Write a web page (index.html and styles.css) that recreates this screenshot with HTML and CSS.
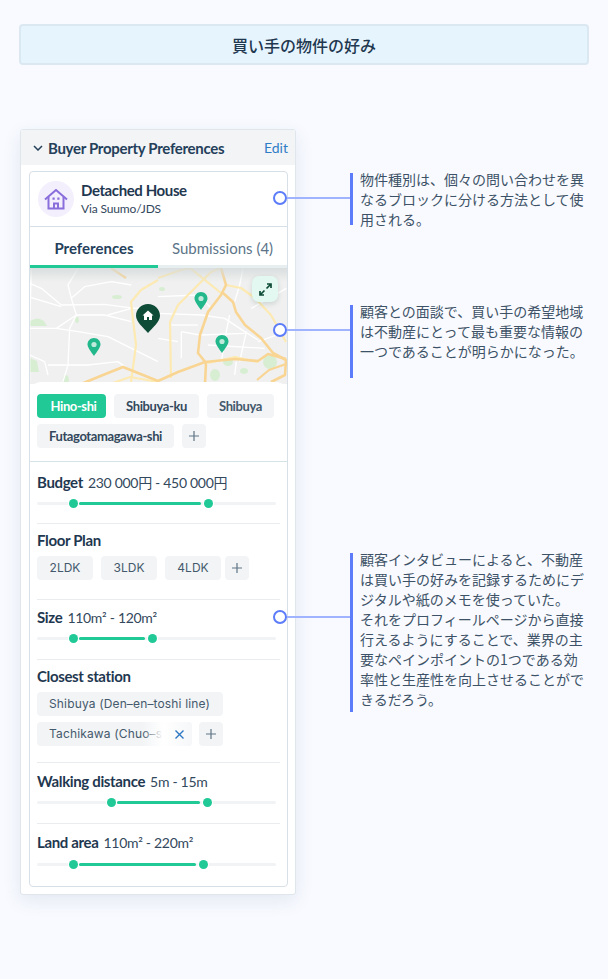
FILE: index.html
```html
<!DOCTYPE html>
<html lang="ja">
<head>
<meta charset="utf-8">
<title>買い手の物件の好み</title>
<link rel="stylesheet" href="styles.css">
</head>
<body>
<div class="stage">
  <h1 class="title">買い手の物件の好み</h1>

  <section class="card">
    <header class="card-head">
      <svg class="chevron" width="10" height="6" viewBox="0 0 10 6"><path d="M1 1l4 4 4-4" fill="none" stroke="#24405a" stroke-width="1.5"/></svg>
      <h2 class="card-title">Buyer Property Preferences</h2>
      <span class="edit">Edit</span>
    </header>

    <div class="inner">
      <div class="profile">
        <span class="avatar">
          <svg width="24" height="21" viewBox="0 0 24 21"><path d="M1 10.500L12 1l11 9.500" fill="none" stroke="#8a6fdc" stroke-width="2"/><path d="M4.500 8V19.500H19.500V8M10 19.500V14.500h4v5" fill="none" stroke="#8a6fdc" stroke-width="2"/><path d="M8.500 8.500h2.200v2.200H8.500zM13.300 8.500h2.200v2.200h-2.200z" fill="#8a6fdc"/></svg>
        </span>
        <div class="profile-text">
          <div class="profile-name">Detached House</div>
          <div class="profile-sub">Via Suumo/JDS</div>
        </div>
      </div>

      <div class="tabs">
        <div class="tab tab-active">Preferences</div>
        <div class="tab">Submissions (4)</div>
      </div>

      <div class="map">
        <svg class="map-art" width="257" height="116" viewBox="30 268 257 116">
          <rect x="30" y="268" width="257" height="116" fill="#f0f0f0"/>
          <g fill="#d8eed3">
            <path d="M30 321q8-5 14 0l3 5H30z"/>
            <ellipse cx="117" cy="297" rx="5" ry="2"/>
            <path d="M30 358l7 3 2 11H30z"/>
            <ellipse cx="270" cy="362" rx="7" ry="7"/>
            <ellipse cx="228" cy="362" rx="5" ry="4"/>
            <ellipse cx="215" cy="375" rx="5" ry="6"/>
            <ellipse cx="244" cy="371" rx="4" ry="3"/>
            <ellipse cx="66" cy="380" rx="3" ry="5"/>
            <ellipse cx="162" cy="289" rx="3" ry="2"/>
            <ellipse cx="77" cy="320" rx="2" ry="3"/>
          </g>
          <g transform="translate(28 265) scale(.3333)" fill="none" stroke="#fff" stroke-width="4" stroke-linejoin="round">
            <path d="M5 55l35 15 60 50 130-2 90 12 60-5"/>
            <path d="M0 95l100 30"/>
            <path d="M10 10L5 180v170"/>
            <path d="M130 100l40-35 80-15 60 10"/>
            <path d="M150 10l-30 50 10 40 15 50-20 40-5 110-15 50"/>
            <path d="M5 190h80l60-40h85l80 20"/>
            <path d="M85 190l65 10 90 15 150 75"/>
            <path d="M5 270l45 20 10 40"/>
            <path d="M60 300h120l90-10 20 15"/>
            <path d="M240 150l70-20"/>
          </g>
          <g transform="translate(158 265) scale(.3333)" fill="none" stroke="#fff" stroke-width="4" stroke-linejoin="round">
            <path d="M0 95l120-5 40 40"/>
            <path d="M0 145l130 5 70 10 60 40 40 25"/>
            <path d="M70 200l55 10 135-5"/>
            <path d="M70 200v80"/>
            <path d="M0 220l60 10"/>
            <path d="M215 150l-10 50-15 90"/>
            <path d="M255 10l-10 50-15 50"/>
            <path d="M280 130l105-60"/>
            <path d="M300 230l85-30"/>
            <path d="M265 200l-20 90"/>
            <path d="M40 180h80"/>
            <path d="M150 240l170 10"/>
            <path d="M230 330l5-40"/>
          </g>
          <g fill="none" stroke="#fdeab2" stroke-width="2.200" stroke-linejoin="round">
            <path d="M158 280l-17 10-10 12 5 43-5 37"/>
            <path d="M110 384l20-7 28 5"/>
            <path d="M171 378l-1-56 8-17 33-33 10-4"/>
            <path d="M158 278l23-8 9-2 31 25"/>
            <path d="M208 363l27-6 23 5"/>
            <path d="M226 285l15 3 14 10 16 17 15 27"/>
          </g>
          <g fill="none" stroke="#f9d594" stroke-width="2.600" stroke-linejoin="round">
            <path d="M81 384l27-11 15-6 15 6 20 8 20-9 27-10 30-3 23 2 10-7 18 5"/>
            <path d="M221 268l5 17-5 10-13 17-8 23-2 18 8 10-1 21"/>
            <path d="M223 293l10 9 3 10 9 13 16 13 12 15 13 7-1 15-14 7"/>
            <path d="M111 268l15 10" stroke-width="2.200"/>
            <path d="M257 380l12-10 17-6" stroke-width="2.200"/>
          </g>
          <defs>
            <linearGradient id="mapShade" x1="0" y1="0" x2="0" y2="1">
              <stop offset="0" stop-color="#d4d9d9" stop-opacity=".8"/>
              <stop offset="1" stop-color="#d4d9d9" stop-opacity="0"/>
            </linearGradient>
          </defs>
          <rect x="30" y="268" width="257" height="14" fill="url(#mapShade)"/>
          <g>
            <path d="M94 338c-3.700 0-6.500 2.900-6.500 6.500 0 3 4 8 6.500 11.500 2.500-3.500 6.500-8.500 6.500-11.500 0-3.600-2.800-6.500-6.500-6.500z" fill="#23b88c"/>
            <circle cx="94" cy="344.500" r="2.600" fill="#bfeadb"/>
            <path d="M201 292c-3.700 0-6.500 2.900-6.500 6.500 0 3 4 8 6.500 11.500 2.500-3.500 6.500-8.500 6.500-11.500 0-3.600-2.800-6.500-6.500-6.500z" fill="#23b88c"/>
            <circle cx="201" cy="298.500" r="2.600" fill="#bfeadb"/>
            <path d="M222 335c-3.700 0-6.500 2.900-6.500 6.500 0 3 4 8 6.500 11.500 2.500-3.500 6.500-8.500 6.500-11.500 0-3.600-2.800-6.500-6.500-6.500z" fill="#23b88c"/>
            <circle cx="222" cy="341.500" r="2.600" fill="#bfeadb"/>
            <path d="M148 304c-6.800 0-12 5.200-12 11.700 0 6.300 7.500 11.800 12 17.300 4.500-5.500 12-11 12-17.300 0-6.500-5.200-11.700-12-11.700z" fill="#0f4c37"/>
            <path d="M148 310.500l-5.500 5h1.500v4.500h3v-3h2v3h3v-4.500h1.500z" fill="#fff"/>
          </g>
        </svg>
        <button class="expand" type="button" aria-label="Expand map">
          <svg width="13" height="13" viewBox="0 0 13 13"><path d="M7.500 5.500L12 1M8 1h4v4M5.500 7.500L1 12M1 8v4h4" fill="none" stroke="#0f4c37" stroke-width="1.700"/></svg>
        </button>
      </div>

      <div class="areas">
        <div class="chips">
          <span class="chip chip-on">Hino-shi</span>
          <span class="chip chip-bold chip-ku">Shibuya-ku</span>
          <span class="chip chip-bold chip-shi">Shibuya</span>
          <span class="chip chip-bold chip-futago">Futagotamagawa-shi</span>
          <span class="chip chip-add"><svg width="14" height="14" viewBox="0 0 14 14"><path d="M7 2v10M2 7h10" stroke="#5f7486" stroke-width="1.200"/></svg></span>
        </div>
      </div>

      <div class="field field-budget">
        <div class="label"><b>Budget</b><span>230 000円 - 450 000円</span></div>
        <div class="slider">
          <i class="fill" style="left:42px;width:122px"></i>
          <i class="knob" style="left:36px"></i>
          <i class="knob" style="left:171px"></i>
        </div>
      </div>

      <div class="field field-floor">
        <div class="label"><b>Floor Plan</b></div>
        <div class="plans">
          <span class="chip chip-plan">2LDK</span>
          <span class="chip chip-plan">3LDK</span>
          <span class="chip chip-plan">4LDK</span>
          <span class="chip chip-add chip-add-near"><svg width="14" height="14" viewBox="0 0 14 14"><path d="M7 2v10M2 7h10" stroke="#5f7486" stroke-width="1.200"/></svg></span>
        </div>
      </div>

      <div class="field field-size">
        <div class="label"><b>Size</b><span>110m² - 120m²</span></div>
        <div class="slider">
          <i class="fill" style="left:42px;width:66px"></i>
          <i class="knob" style="left:36px"></i>
          <i class="knob" style="left:115px"></i>
        </div>
      </div>

      <div class="field field-station">
        <div class="label"><b>Closest station</b></div>
        <div class="stations">
          <span class="chip chip-station chip-station-full">Shibuya (Den–en–toshi line)</span>
          <div class="station-row">
            <span class="chip chip-station chip-station-cut">
              <span class="cut-text">Tachikawa (Chuo–sen line)</span>
              <svg class="cut-x" width="11" height="11" viewBox="0 0 11 11"><path d="M1.500 1.500l8 8M9.500 1.500l-8 8" stroke="#2f78c4" stroke-width="1.400"/></svg>
            </span>
            <span class="chip chip-add"><svg width="14" height="14" viewBox="0 0 14 14"><path d="M7 2v10M2 7h10" stroke="#5f7486" stroke-width="1.200"/></svg></span>
          </div>
        </div>
      </div>

      <div class="field field-walk">
        <div class="label"><b>Walking distance</b><span>5m - 15m</span></div>
        <div class="slider">
          <i class="fill" style="left:80px;width:83px"></i>
          <i class="knob" style="left:74px"></i>
          <i class="knob" style="left:170px"></i>
        </div>
      </div>

      <div class="field field-land">
        <div class="label"><b>Land area</b><span>110m² - 220m²</span></div>
        <div class="slider">
          <i class="fill" style="left:42px;width:117px"></i>
          <i class="knob" style="left:36px"></i>
          <i class="knob" style="left:166px"></i>
        </div>
      </div>
    </div>
  </section>

  <div class="pin pin-a"></div>
  <div class="pin pin-b"></div>
  <div class="pin pin-c"></div>

  <aside class="note note-a"><p>物件種別は、個々の問い合わせを異<br>なるブロックに分ける方法として使<br>用される。</p></aside>
  <aside class="note note-b"><p>顧客との面談で、買い手の希望地域<br>は不動産にとって最も重要な情報の<br>一つであることが明らかになった。</p></aside>
  <aside class="note note-c"><p>顧客インタビューによると、不動産<br>は買い手の好みを記録するためにデ<br>ジタルや紙のメモを使っていた。<br>それをプロフィールページから直接<br>行えるようにすることで、業界の主<br>要なペインポイントの1つである効<br>率性と生産性を向上させることがで<br>きるだろう。</p></aside>
</div>
</body>
</html>
```
FILE: styles.css
```css
*, *::before, *::after { box-sizing: border-box; }
html, body { margin: 0; padding: 0; }
body {
  background: #f8faff;
  color: #1f3850;
  font-family: Lato, "Noto Sans CJK JP", sans-serif;
}
.stage {
  position: relative;
  width: 608px;
  height: 979px;
  overflow: hidden;
  padding-top: 24px;
}
.title {
  margin: 0 19px;
  height: 41px;
  display: flex;
  align-items: center;
  justify-content: center;
  background: #e6f4fe;
  border: 2px solid #dce8f1;
  border-radius: 4px;
  font: 500 16px/1 "Noto Sans CJK JP", sans-serif;
  color: #1f3850;
}

/* Card */
.card {
  margin: 64px 0 0 20px;
  width: 276px;
  height: 766px;
  background: #fff;
  border: 1px solid #dfe6ec;
  border-radius: 3px;
  box-shadow: 0 6px 18px rgba(50, 80, 120, .10);
}
.card-head {
  height: 35px;
  display: flex;
  align-items: center;
  padding: 0 7px 0 12px;
  background: #f2f4f6;
}
.chevron { margin-right: 5px; }
.card-title {
  margin: 0;
  flex: 1;
  font: 700 15px/20px Lato, sans-serif;
  letter-spacing: -.3px;
  color: #24405a;
}
.edit { font-size: 14px; color: #2f7cc6; }

.inner {
  margin: 6px 0 0 8px;
  width: 259px;
  height: 716px;
  border: 1px solid #d8e0e7;
  border-radius: 4px;
  overflow: hidden;
}
.profile {
  height: 55px;
  display: flex;
  align-items: center;
  padding-left: 8px;
  border-bottom: 1px solid #d8e0e7;
}
.avatar {
  width: 36px;
  height: 36px;
  border-radius: 50%;
  background: #f3effd;
  display: flex;
  align-items: center;
  justify-content: center;
  margin-right: 7px;
}
.profile-name {
  font: 700 15px/18px Lato, sans-serif;
  letter-spacing: -.4px;
  color: #1f3850;
}
.profile-sub {
  font: 400 12px/16px Lato, sans-serif;
  letter-spacing: -.15px;
  color: #33485c;
  margin-top: 2px;
}

.tabs { display: flex; height: 41px; border-bottom: 3px solid #e7eef0; }
.tab {
  height: 41px;
  display: flex;
  align-items: center;
  justify-content: center;
  font-size: 15px;
  color: #5c7488;
  width: 129px;
  white-space: nowrap;
}
.tab-active {
  width: 128px;
  padding-top: 3px;
  font-weight: 700;
  color: #24405a;
  border-bottom: 3px solid #21c997;
}

/* Map */
.map { position: relative; height: 116px; }
.map-art { display: block; }
.expand {
  position: absolute;
  top: 8px;
  left: 222px;
  width: 26px;
  height: 26px;
  padding: 0;
  border: 0;
  border-radius: 7px;
  background: #e3f8f1;
  box-shadow: 0 2px 5px rgba(30, 70, 60, .16);
  display: flex;
  align-items: center;
  justify-content: center;
}

/* Area chips */
.areas {
  position: relative;
  margin-top: -2px;
  height: 80px;
  background: #fff;
  border-radius: 11px 11px 0 0;
  border-bottom: 1px solid #d6e3e6;
  padding: 12px 0 0 7px;
}
.chips { display: flex; flex-wrap: wrap; gap: 6px 8px; width: 245px; }
.chip {
  height: 24px;
  display: inline-flex;
  align-items: center;
  justify-content: center;
  background: #f2f4f6;
  border-radius: 4px;
  font-size: 13px;
  letter-spacing: -.4px;
  color: #33485c;
  padding-bottom: 1px;
}
.chip-on { width: 69px; background: #21c997; color: #fff; font-weight: 700; padding-left: 4px; }
.chip-bold { font-weight: 700; }
.chip-ku { width: 85px; }
.chip-shi { width: 67px; color: #44596c; }
.chip-futago { width: 137px; }
.chip-add { width: 24px; padding-bottom: 0; }
.chip-add-near { margin-left: -4px; }

/* Fields */
.field {
  margin: 0 7px;
  width: 243px;
  border-bottom: 1px solid #e9edf0;
}
.field-budget { height: 62px; padding-top: 10px; }
.field-floor { height: 76px; padding-top: 6px; }
.field-size { height: 60px; padding-top: 7px; }
.field-station { height: 103px; padding-top: 6px; }
.field-walk { height: 61px; padding-top: 8px; }
.field-land { border-bottom: 0; padding-top: 8px; }
.label {
  display: flex;
  align-items: center;
  height: 20px;
  font-size: 14px;
  letter-spacing: -.3px;
  color: #33485c;
}
.label b {
  color: #1f3850;
  font-size: 15px;
  font-weight: 700;
  letter-spacing: -.35px;
  margin-right: 5px;
}

.slider {
  position: relative;
  margin-top: 6px;
  width: 239px;
  height: 10px;
}
.field-land .slider { margin-top: 7px; }
.slider::before {
  content: "";
  position: absolute;
  left: 0;
  right: 0;
  top: 3.500px;
  height: 3px;
  border-radius: 2px;
  background: #f1f3f5;
}
.fill {
  position: absolute;
  top: 3.500px;
  height: 3px;
  border-radius: 2px;
  background: #21c997;
}
.knob {
  position: absolute;
  top: .5px;
  margin-left: -4.500px;
  width: 9px;
  height: 9px;
  border-radius: 50%;
  background: #21c997;
  box-shadow: 0 0 0 1px #fff;
}

.plans { display: flex; gap: 8px; margin-top: 6px; }
.chip-plan {
  width: 56px;
  padding-bottom: 0;
  font: 400 12px/1 Inter, sans-serif;
  letter-spacing: 0;
  color: #44596c;
}

.stations { margin-top: 6px; display: flex; flex-direction: column; gap: 6px; align-items: flex-start; }
.station-row { display: flex; gap: 7px; }
.chip-station {
  justify-content: flex-start;
  padding: 0 0 0 12px;
  font: 400 12px/1 Inter, sans-serif;
  letter-spacing: .15px;
  color: #44596c;
  white-space: nowrap;
}
.chip-station-full { width: 186px; }
.chip-station-cut {
  position: relative;
  width: 155px;
  overflow: hidden;
}
.chip-station-cut::after {
  content: "";
  position: absolute;
  top: 0;
  bottom: 0;
  right: 0;
  width: 50px;
  background: linear-gradient(90deg, rgba(242, 244, 246, 0), #fff 42%, #f6f7f9 100%);
}
.cut-text { display: block; }
.cut-x { position: absolute; right: 7px; top: 6.500px; z-index: 1; }

/* Annotation pins */
.pin {
  position: absolute;
  left: 287px;
  width: 63px;
  height: 2px;
  background: #9fb3ff;
}
.pin::before {
  content: "";
  position: absolute;
  left: -14px;
  top: -6px;
  width: 14px;
  height: 14px;
  border: 2.500px solid #5c7cfa;
  border-radius: 50%;
  background: #fff;
}
.pin-a { top: 197px; }
.pin-b { top: 329px; }
.pin-c { top: 616px; }

/* Notes */
.note {
  position: absolute;
  left: 350px;
  border-left: 3px solid #5c7cfa;
}
.note p {
  margin: -4px 0 0 7px;
  font: 400 14px/20px "Noto Sans CJK JP", sans-serif;
  color: #3d5266;
  white-space: nowrap;
}
.note-a { top: 173px; height: 52px; }
.note-b { top: 305px; height: 73px; }
.note-c { top: 553px; height: 159px; }
```
